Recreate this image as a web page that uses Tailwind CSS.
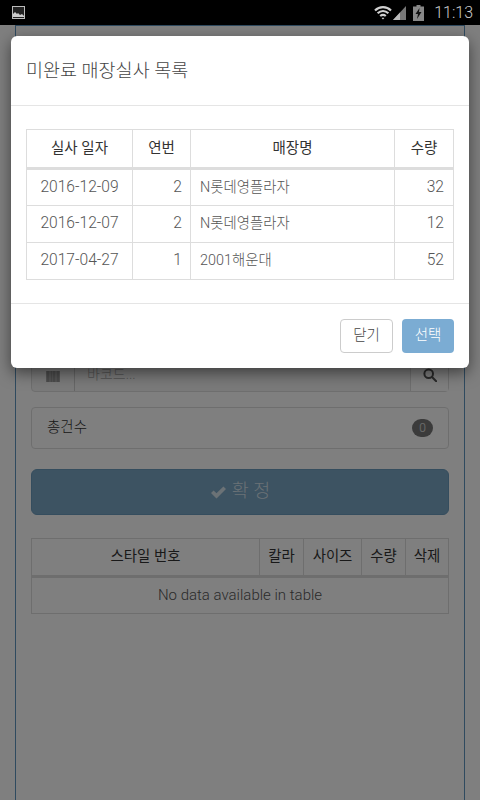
<!DOCTYPE html>
<html lang="ko">
<head>
<meta charset="utf-8">
<script src="https://cdn.jsdelivr.net/npm/@tailwindcss/browser@4"></script>
</head>
<body class="relative w-[480px] h-[800px] overflow-hidden bg-white font-['Roboto','Noto_Sans_CJK_KR',sans-serif] font-light text-[#333]">
  <!-- page beneath the dialog -->
  <div class="h-[800px] pt-[25px] flex justify-center">
    <div class="w-[450px] h-[800px] border border-[#5e94be] px-[15px] pt-[331px] bg-white">
      <div class="flex h-[35px] rounded-b border border-[#ddd] bg-[#f4f4f4] text-[14px]">
        <div class="w-[43px] flex items-center justify-center border-r border-[#ccc]">
          <svg width="14" height="11" viewBox="0 0 14 11" class="mt-[4px]"><path fill="#aaa" d="M0 0h14v11H0z"/><path fill="#999" d="M1 0h2v11H1zM5 0h1v11H5zM7 0h2v11H7zM11 0h2v11h-2z"/></svg>
        </div>
        <div class="flex-1 px-[12px] flex items-center text-[#aaa]">바코드...</div>
        <div class="w-[38px] flex items-center justify-center border-l border-[#ddd] bg-white">
          <svg width="14" height="14" viewBox="0 0 14 14" fill="none" stroke="#555" stroke-width="2"><circle cx="5.700" cy="5.700" r="4.300"/><path d="M9 9l4.200 4.200" stroke-linecap="round"/></svg>
        </div>
      </div>
      <div class="mt-[15px] h-[42px] rounded border border-[#ddd] flex items-center justify-between pl-[15px] pr-[15px] text-[14.500px]">
        <span>총건수</span>
        <span class="w-[21px] h-[18px] rounded-full bg-[#777] text-white/80 text-[12px] flex items-center justify-center">0</span>
      </div>
      <div class="mt-[20px] h-[46px] rounded-md bg-[#7ba6c4] border border-[#6a9abc] flex items-center justify-center gap-[5px] text-white/70 text-[18.500px]">
        <svg width="17" height="15" viewBox="0 0 17 15"><path fill="currentColor" d="M1 8l2.600-2.600L6.500 8.300 13.400 1.500 16 4.100 6.500 13.600z"/></svg>
        <span>확 정</span>
      </div>
      <table class="mt-[23px] w-[417px] table-fixed border-collapse text-[14.400px]">
        <thead>
          <tr class="h-[38px]">
            <th class="w-[228px] border border-[#ddd] border-b-[3px] font-normal">스타일 번호</th>
            <th class="w-[44px] border border-[#ddd] border-b-[3px] font-normal">칼라</th>
            <th class="w-[58px] border border-[#ddd] border-b-[3px] font-normal">사이즈</th>
            <th class="w-[44px] border border-[#ddd] border-b-[3px] font-normal">수량</th>
            <th class="w-[43px] border border-[#ddd] border-b-[3px] font-normal">삭제</th>
          </tr>
        </thead>
        <tbody>
          <tr class="h-[37px]"><td colspan="5" class="border border-[#ddd] text-center text-[15px] text-[#555]">No data available in table</td></tr>
        </tbody>
      </table>
    </div>
  </div>

  <!-- backdrop -->
  <div class="absolute inset-0 bg-black/50"></div>

  <!-- status bar -->
  <div class="absolute top-0 left-0 w-full h-[25px] bg-black flex items-center justify-between pl-[12px] pr-[7px]">
    <svg width="13" height="13" viewBox="0 0 13 13" fill="none"><rect x="0.500" y="0.500" width="12" height="12" fill="#222" stroke="#bbb"/><path fill="#ccc" d="M1 11V8l2-2 2 2 1-1 2 2 2-1 2 2v1z"/></svg>
    <div class="flex items-center">
      <svg width="18" height="14" viewBox="0 0 18 14" fill="none" stroke="#d0d0d0" stroke-width="2.200"><path d="M1 4.500C5.500 0 12.500 0 17 4.500"/><path d="M3.600 7.300C6.800 4.300 11.200 4.300 14.400 7.300"/><path d="M6.200 10C7.800 8.700 10.200 8.700 11.800 10"/><path d="M9 13.500L7.600 12C8.400 11.500 9.600 11.500 10.400 12z" fill="#d0d0d0" stroke="none"/></svg>
      <svg width="13" height="14" viewBox="0 0 13 14" class="ml-[1px]"><path fill="#777" d="M0 14L13 0v14z"/><path fill="#bbb" d="M0 14l7-7.500V14z"/></svg>
      <svg width="11" height="16" viewBox="0 0 11 16" class="ml-[7px]"><path fill="#888" d="M3.500 0h4v1.500H11V16H0V1.500h3.500z"/><path fill="#111" d="M6.500 3L2.500 9h2.500L4 14 8.500 7H6z"/></svg>
      <span class="ml-[10px] text-[#ccc] text-[16px] leading-none">11:13</span>
    </div>
  </div>

  <!-- dialog -->
  <div class="absolute left-[11px] top-[36px] w-[458px] h-[332px] bg-white rounded-md shadow-[0_5px_15px_rgba(0,0,0,0.5)] flex flex-col">
    <div class="h-[70px] border-b border-[#e5e5e5] flex items-center pl-[15px] pt-[2px] text-[18.500px] text-[#444]">미완료 매장실사 목록</div>
    <div class="h-[197px] pl-[15px] pt-[23px]">
      <table class="w-[427px] table-fixed border-collapse text-[15.600px]">
        <thead>
          <tr class="h-[39px] text-[14.500px]">
            <th class="w-[106px] border border-[#ddd] border-b-[3px] font-normal">실사 일자</th>
            <th class="w-[58px] border border-[#ddd] border-b-[3px] font-normal">연번</th>
            <th class="w-[204px] border border-[#ddd] border-b-[3px] font-normal">매장명</th>
            <th class="w-[59px] border border-[#ddd] border-b-[3px] font-normal">수량</th>
          </tr>
        </thead>
        <tbody class="text-[#555]">
          <tr class="h-[37px]"><td class="border border-[#ddd] text-center">2016-12-09</td><td class="border border-[#ddd] text-right pr-[8px]">2</td><td class="border border-[#ddd] pl-[9px] text-[14.400px]">N롯데영플라자</td><td class="border border-[#ddd] text-right pr-[9px]">32</td></tr>
          <tr class="h-[37px]"><td class="border border-[#ddd] text-center">2016-12-07</td><td class="border border-[#ddd] text-right pr-[8px]">2</td><td class="border border-[#ddd] pl-[9px] text-[14.400px]">N롯데영플라자</td><td class="border border-[#ddd] text-right pr-[9px]">12</td></tr>
          <tr class="h-[37px]"><td class="border border-[#ddd] text-center">2017-04-27</td><td class="border border-[#ddd] text-right pr-[8px]">1</td><td class="border border-[#ddd] pl-[9px] text-[14.400px]">2001해운대</td><td class="border border-[#ddd] text-right pr-[9px]">52</td></tr>
        </tbody>
      </table>
    </div>
    <div class="flex-1 border-t border-[#e5e5e5] flex justify-end gap-[9px] pt-[15px] pr-[15px] text-[14.500px]">
      <div class="w-[53px] h-[34px] rounded border border-[#ccc] flex items-center justify-center text-[#444]">닫기</div>
      <div class="w-[52px] h-[34px] rounded bg-[#7bacd3] flex items-center justify-center text-white">선택</div>
    </div>
  </div>
</body>
</html>
